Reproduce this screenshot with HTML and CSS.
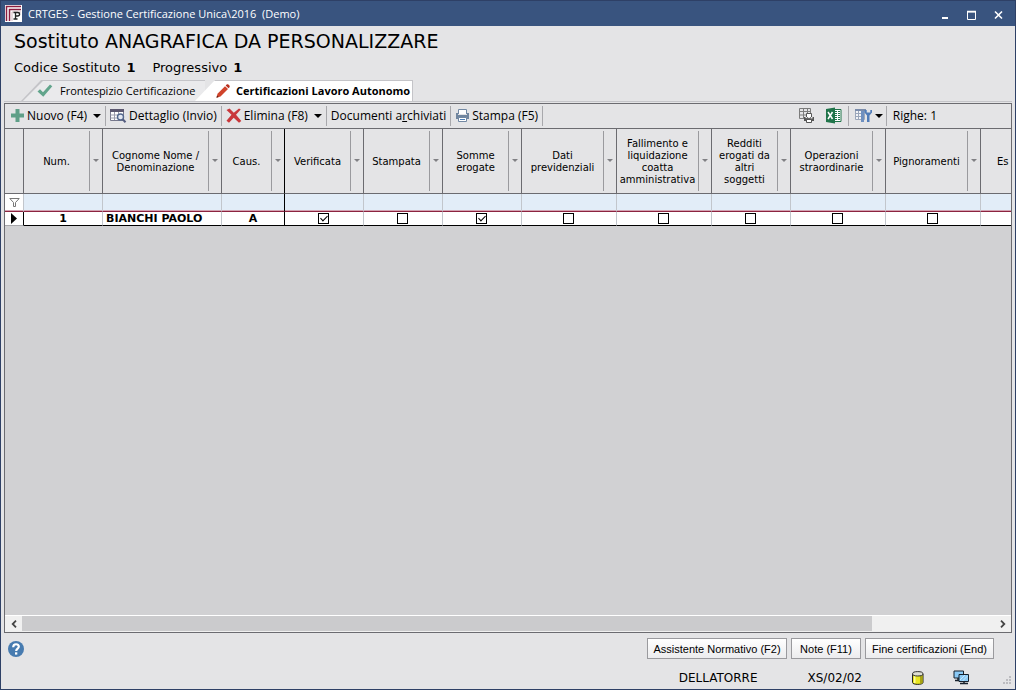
FILE: index.html
```html
<!DOCTYPE html>
<html lang="it">
<head>
<meta charset="utf-8">
<title>CRTGES - Gestione Certificazione Unica\2016 (Demo)</title>
<link rel="stylesheet" href="styles.css">
</head>
<body>
<div class="window">
  <header class="titlebar">
    <svg class="app-icon" width="17" height="17" viewBox="0 0 17 17" aria-hidden="true">
      <rect width="17" height="17" fill="#fff"/>
      <path d="M1.500 16V1.500H16M4.500 16V4.500H16" fill="none" stroke="#8c1d3f" stroke-width="1.500"/>
      <path d="M7 16V7H16" fill="none" stroke="#b98a99" stroke-width=".6"/>
      <path d="M8.500 7.500h4c2.800 0 2.800 3.500 0 3.500H10.500M10.500 7.500V14M8.500 14h4" fill="none" stroke="#222" stroke-width="1.300"/>
    </svg>
    <span class="window-title">CRTGES - Gestione Certificazione Unica\2016&nbsp; (Demo)</span>
    <div class="window-controls">
      <button type="button" aria-label="Riduci a icona"><svg width="11" height="11" viewBox="0 0 11 11"><path d="M3 8h6" stroke="#fff" stroke-width="2"/></svg></button>
      <button type="button" aria-label="Ingrandisci"><svg width="11" height="11" viewBox="0 0 11 11"><path d="M1.500 2h8v7.500h-8z" fill="none" stroke="#fff"/><path d="M1 1.500h9" stroke="#fff" stroke-width="1.500"/></svg></button>
      <button type="button" aria-label="Chiudi"><svg width="11" height="11" viewBox="0 0 11 11"><path d="M2 1.500l7 7M9 1.500l-7 7" stroke="#fff" stroke-width="1.600"/></svg></button>
    </div>
  </header>

  <main class="content">
    <h1 class="heading">Sostituto ANAGRAFICA DA PERSONALIZZARE</h1>
    <p class="subheading"><span>Codice Sostituto <b>1</b></span><span>Progressivo <b>1</b></span></p>

    <div class="tabs" role="tablist">
      <button type="button" class="tab" role="tab" aria-selected="false">
        <svg width="16" height="14" viewBox="0 0 16 14" aria-hidden="true"><path d="M0.500 7.500L3 5.300l3 3L13 0.500l2.300 1.800L6.300 12.800z" fill="#62a58c"/></svg>
        Frontespizio Certificazione
      </button>
      <button type="button" class="tab tab-active" role="tab" aria-selected="true">
        <svg width="16" height="16" viewBox="0 0 16 16" aria-hidden="true"><path d="M1.500 14.700l1-4L10 3.200l3 2.800-7.500 7.600z" fill="#d0432b"/><path d="M10.700 2.500l1-1c1.300-1 3.800 1.500 2.800 2.800l-1 1z" fill="#b8301f"/><path d="M1.500 14.700l.5-2.200 1.700 1.600z" fill="#5a2018"/></svg>
        Certificazioni Lavoro Autonomo
      </button>
    </div>

    <section class="panel">
      <div class="toolbar">
        <button type="button" class="tool">
          <svg width="15" height="15" viewBox="0 0 15 15" aria-hidden="true"><path d="M5.500 1h4v4.500H14v4H9.500V14h-4V9.500H1v-4h4.500z" fill="#5f9f88"/></svg>
          Nuovo (F4)<i class="caret"></i>
        </button>
        <button type="button" class="tool">
          <svg width="17" height="15" viewBox="0 0 17 15" aria-hidden="true"><path d="M.5 1.500h13v11H.5z" fill="#fff" stroke="#77788c"/><path d="M0 1h14v3H0z" fill="#5c5870"/><path d="M.5 7h13M.5 10h13M4.500 4v8M8.500 4v8" stroke="#9b9cac" fill="none"/><circle cx="10.500" cy="9" r="3" fill="#e4e8f2" stroke="#55698e" stroke-width="1.400"/><path d="M12.700 11.300l2.800 3" stroke="#555d80" stroke-width="2"/></svg>
          Dettaglio (Invio)
        </button>
        <button type="button" class="tool">
          <svg width="16" height="15" viewBox="0 0 16 15" aria-hidden="true"><path d="M.5 2L3.500.5l4.300 4.200L13 .5l1.700 1L10 6.800l5.300 6.200-2.300 1.700-5.300-5-4.700 5L.5 12.800l5-6z" fill="#c9373b"/></svg>
          Elimina (F8)<i class="caret"></i>
        </button>
        <button type="button" class="tool"><span>Documenti a<u>r</u>chiviati</span></button>
        <button type="button" class="tool">
          <svg width="15" height="15" viewBox="0 0 15 15" aria-hidden="true"><path d="M3.500 6V1.500h8V6" fill="#fff" stroke="#7288a3"/><path d="M1 5h2v2h9V5h2v6H1z" fill="#71869f"/><path d="M3.500 9.500h8v4h-8z" fill="#fff" stroke="#7288a3"/><path d="M5 11.500h5" stroke="#4d80b8"/></svg>
          Stampa (F5)
        </button>
        <div class="toolbar-right">
          <button type="button" class="tool-icon" aria-label="Stampa griglia">
            <svg width="17" height="17" viewBox="0 0 17 17"><path d="M1.500 1.500h11v10h-11zM1.500 4.500h11M1.500 8h11M5.500 1.500v10M9.500 1.500v10" fill="none" stroke="#7c7c7c"/><path d="M8.500 10V6.500h5V10" fill="#fff" stroke="#555"/><path d="M6 10h1.500v1.500h7V10H16v4H6z" fill="#555"/><path d="M8.500 12.500h5v3h-5z" fill="#fff" stroke="#555"/></svg>
          </button>
          <button type="button" class="tool-icon" aria-label="Esporta in Excel">
            <svg width="17" height="17" viewBox="0 0 17 17"><path d="M8 2.500h8v12H8z" fill="#fff" stroke="#20744a"/><path d="M10 4.500h2M13 4.500h2M10 6.500h2M13 6.500h2M10 8.500h2M13 8.500h2M10 10.500h2M13 10.500h2M10 12.500h2M13 12.500h2" stroke="#20744a"/><path d="M1 2l9-1.500v16L1 15z" fill="#20744a"/><path d="M3 5l4.500 7M7.500 5L3 12" stroke="#fff" stroke-width="1.500"/></svg>
          </button>
          <button type="button" class="tool-icon tool-columns" aria-label="Opzioni colonne">
            <svg width="17" height="15" viewBox="0 0 17 15"><path d="M.5 2.500h9v9h-9zM.5 5.500h9M.5 8.500h9M3.500 2v9.500" fill="#f2f3f6" stroke="#9aa6ba"/><path d="M0 1h11v2H0z" fill="#7a8cab"/><path d="M6 3h3v11H6z" fill="#6f90c0"/><path d="M9.500 2v2.500l2.500 3V14h2.500V7.500L17 4.500V2h-1.700v2.500h-3.600V2z" fill="#4f7bb8"/></svg><i class="caret"></i>
          </button>
          <span class="row-count">Righe: 1</span>
        </div>
      </div>

      <div class="grid-area">
        <table class="grid">
          <colgroup>
            <col class="c-mark"><col class="c-m"><col class="c-name"><col class="c-s"><col class="c-m"><col class="c-m"><col class="c-m"><col class="c-l"><col class="c-l"><col class="c-m"><col class="c-l"><col class="c-l"><col class="c-m">
          </colgroup>
          <thead>
            <tr>
              <th></th>
              <th scope="col"><div class="head"><span>Num.</span><i></i></div></th>
              <th scope="col"><div class="head"><span>Cognome Nome /<br>Denominazione</span><i></i></div></th>
              <th scope="col" class="frozen"><div class="head"><span>Caus.</span><i></i></div></th>
              <th scope="col"><div class="head"><span>Verificata</span><i></i></div></th>
              <th scope="col"><div class="head"><span>Stampata</span><i></i></div></th>
              <th scope="col"><div class="head"><span>Somme<br>erogate</span><i></i></div></th>
              <th scope="col"><div class="head"><span>Dati<br>previdenziali</span><i></i></div></th>
              <th scope="col"><div class="head"><span>Fallimento e<br>liquidazione<br>coatta<br>amministrativa</span><i></i></div></th>
              <th scope="col"><div class="head"><span>Redditi<br>erogati da<br>altri<br>soggetti</span><i></i></div></th>
              <th scope="col"><div class="head"><span>Operazioni<br>straordinarie</span><i></i></div></th>
              <th scope="col"><div class="head"><span>Pignoramenti</span><i></i></div></th>
              <th scope="col" class="cut">Es</th>
            </tr>
          </thead>
          <tbody>
            <tr class="filter">
              <td><svg width="11" height="11" viewBox="0 0 11 11" aria-hidden="true"><path d="M.8 1.500h9.400L6.500 5.500V9.500h-2v-4z" fill="none" stroke="#777"/></svg></td>
              <td></td><td></td><td class="frozen"></td><td></td><td></td><td></td><td></td><td></td><td></td><td></td><td></td><td></td>
            </tr>
            <tr class="record">
              <td class="marker"><svg width="6" height="11" viewBox="0 0 6 11" aria-hidden="true"><path d="M0 0l6 5.500L0 11z"/></svg></td>
              <td>1</td>
              <td class="name">BIANCHI PAOLO</td>
              <td class="frozen">A</td>
              <td><input type="checkbox" aria-label="Verificata" checked></td>
              <td><input type="checkbox" aria-label="Stampata"></td>
              <td><input type="checkbox" aria-label="Somme erogate" checked></td>
              <td><input type="checkbox" aria-label="Dati previdenziali"></td>
              <td><input type="checkbox" aria-label="Fallimento e liquidazione coatta amministrativa"></td>
              <td><input type="checkbox" aria-label="Redditi erogati da altri soggetti"></td>
              <td><input type="checkbox" aria-label="Operazioni straordinarie"></td>
              <td><input type="checkbox" aria-label="Pignoramenti"></td>
              <td></td>
            </tr>
          </tbody>
        </table>
      </div>

      <div class="scrollbar">
        <button type="button" aria-label="Scorri a sinistra"><svg width="6" height="8" viewBox="0 0 6 8"><path d="M5 .7L1.700 4 5 7.300" fill="none" stroke="#444" stroke-width="1.800"/></svg></button>
        <div class="track"><div class="thumb"></div></div>
        <button type="button" aria-label="Scorri a destra"><svg width="6" height="8" viewBox="0 0 6 8"><path d="M1 .7L4.300 4 1 7.300" fill="none" stroke="#444" stroke-width="1.800"/></svg></button>
      </div>
    </section>

    <footer class="actions">
      <button type="button" aria-label="Aiuto"><svg width="16" height="16" viewBox="0 0 16 16"><circle cx="8" cy="8" r="8" fill="#477bb0"/><path d="M5.200 6.300C5.200 2.200 11 2.400 10.800 5.800 10.700 7.700 8.200 7.800 8.200 10" fill="none" stroke="#fff" stroke-width="2.200"/><path d="M7 11.300h2.300v2.300H7z" fill="#fff"/></svg></button>
      <div class="action-buttons">
        <button type="button" class="push push-wide">Assistente Normativo (F2)</button>
        <button type="button" class="push push-small">Note (F11)</button>
        <button type="button" class="push push-mid">Fine certificazioni (End)</button>
      </div>
    </footer>
    <div class="status">
      <span>DELLATORRE</span>
      <span class="status-code">XS/02/02</span>
      <svg class="status-db" width="12" height="14" viewBox="0 0 12 14" aria-hidden="true"><path d="M.5 3v8.500c0 2.500 10.500 2.500 10.500 0V3z" fill="#e9e622" stroke="#222"/><path d="M8 5h2.500v7L8 13z" fill="#a9a514"/><path d="M2 5h1.500v7H2z" fill="#ffff9a"/><ellipse cx="5.750" cy="2.800" rx="5.200" ry="2.200" fill="#deded2" stroke="#333"/></svg>
      <svg class="status-net" width="17" height="15" viewBox="0 0 17 15" aria-hidden="true"><path d="M1 1h9.500v7H1z" fill="#8bcaf6" stroke="#16202c"/><path d="M2 10.500h6M5 8v2" stroke="#16202c" stroke-width="1.500"/><path d="M6 4.500h9.500v7H6z" fill="#8bcaf6" stroke="#16202c"/><path d="M7 10L12 5M9.500 11l5-5" stroke="#c9e9ff"/><path d="M7 13.500h8M11 11v2" stroke="#16202c" stroke-width="1.500"/></svg>
      <svg class="grip" width="9" height="9" viewBox="0 0 9 9" aria-hidden="true"><path d="M6 0h2v2H6zM3 3h2v2H3zM6 3h2v2H6zM0 6h2v2H0zM3 6h2v2H3zM6 6h2v2H6z" fill="#bcbcc0"/></svg>
    </div>
  </main>
</div>
</body>
</html>
```
FILE: styles.css
```css
* { box-sizing: border-box; }

body {
  margin: 0;
  font-family: "DejaVu Sans", Verdana, sans-serif;
  color: #000;
}

button {
  margin: 0;
  padding: 0;
  border: 0;
  background: none;
  color: inherit;
  font: inherit;
  white-space: nowrap;
}

svg { display: block; flex: none; }

.window {
  display: flex;
  flex-direction: column;
  height: 100vh;
  overflow: hidden;
  background: #e4e4e6;
  border: 1px solid #2e4066;
}

/* Title bar */
.titlebar {
  display: flex;
  align-items: center;
  flex: none;
  height: 25px;
  padding: 0 9px 0 4px;
  background: #39547f;
  color: #fff;
  font: 11px "Open Sans", "Noto Sans", sans-serif;
}
.window-title { margin-left: 6px; }
.window-controls { display: flex; gap: 16px; margin: 3px 2px 0 auto; }

/* Page body */
.content {
  display: flex;
  flex-direction: column;
  flex: 1;
  min-height: 0;
  padding: 0 3px;
}
.heading {
  margin: 3px 10px 0;
  font-size: 19px;
  font-weight: 400;
  line-height: 24px;
}
.subheading {
  display: flex;
  gap: 17px;
  margin: 7px 10px 0;
  font-size: 13px;
  line-height: 16px;
}
.subheading b { margin-left: 2px; }

/* Tabs */
.tabs {
  display: flex;
  margin-top: 4px;
  height: 22px;
  border-bottom: 1px solid #c4c4c8;
}
.tab {
  display: flex;
  align-items: center;
  gap: 7px;
  width: 184px;
  height: 21px;
  margin-left: 17px;
  padding: 0 6px 1px 16px;
  border-top: 1px solid #c4c4c8;
  background: linear-gradient(135deg, #c4c4c8 15px, #eaeaec 16px);
  clip-path: polygon(20px 0, 100% 0, 100% 100%, 0 100%);
  font: 11px "Open Sans", "Noto Sans", sans-serif;
}
.tab-active {
  gap: 5px;
  width: 218px;
  margin-left: -10px;
  padding-left: 20px;
  border-right: 1px solid #c4c4c8;
  background: #fff;
  font-weight: 700;
}

/* Panel */
.panel {
  display: flex;
  flex-direction: column;
  flex: 1;
  min-height: 0;
  margin-top: 1px;
  border: 1px solid #6b6b70;
}
.toolbar {
  display: flex;
  align-items: center;
  flex: none;
  height: 25px;
  padding-bottom: 1px;
  border-bottom: 1px solid #6b6b70;
  font: 12px "Open Sans", "Noto Sans", sans-serif;
}
.tool {
  display: flex;
  align-items: center;
  gap: 2px;
  height: 20px;
  padding: 0 4px;
  border-right: 1px solid #a8a8ac;
}
.tool:first-child { padding-left: 5px; }
.caret {
  margin-left: 4px;
  border: 4px solid transparent;
  border-top-color: #000;
  border-bottom: 0;
}
.toolbar-right {
  display: flex;
  align-items: center;
  margin: 0 74px 0 auto;
}
.tool-icon { display: flex; align-items: center; margin-right: 10px; }
.tool-columns {
  height: 20px;
  margin: 0 0 0 -4px;
  padding: 0 3px 0 6px;
  border: 1px solid #a8a8ac;
  border-width: 0 1px;
}
.tool-columns .caret { margin-left: 3px; }
.row-count { margin-left: 6px; }

/* Data grid */
.grid-area {
  flex: 1;
  min-height: 0;
  overflow: hidden;
  background: #d1d1d3;
}
.grid {
  table-layout: fixed;
  width: 0;
  border-collapse: separate;
  border-spacing: 0;
}
.c-mark { width: 19px; }
.c-s { width: 63px; }
.c-m { width: 79px; }
.c-l { width: 95px; }
.c-name { width: 119px; }

.grid th {
  height: 65px;
  padding: 0;
  background: #e4e4e6;
  border-right: 1px solid #6b6b70;
  border-bottom: 1px solid #6b6b70;
  font-size: 10px;
  font-weight: 400;
  line-height: 12px;
  white-space: nowrap;
}
.head { display: flex; height: 64px; padding: 2px 0; }
.head span {
  display: flex;
  flex: 1;
  min-width: 0;
  align-items: center;
  justify-content: center;
  padding-top: 2px;
  border-right: 1px solid #9a9a9e;
}
.head i {
  flex: none;
  width: 6px;
  height: 3px;
  margin: 28px 3px 0;
  border: 3px solid transparent;
  border-top-color: #808084;
  border-bottom: 0;
}
.grid th.cut { padding: 2px 0 0 16px; text-align: left; }

.grid td {
  padding: 0;
  text-align: center;
  border-right: 1px solid #c2c6cc;
}
.filter td {
  height: 18px;
  background: #e2edf8;
  border-bottom: 1px solid #8c2440;
  box-shadow: inset 0 -1px #d3a3b2;
}
.filter td:first-child { background: #fff; }
.filter svg { margin: 0 auto; }
.record td {
  height: 14px;
  background: #fff;
  border-bottom: 1px solid #000;
  font-size: 11px;
  font-weight: 700;
  line-height: 12px;
}
.grid td.name { padding-left: 3px; text-align: left; }
.record .marker svg { margin: 0 auto; }
.grid .record .marker { border-right-color: #000; border-bottom-color: #a8a8ac; }
.grid .frozen { border-right-color: #000; }

.record input {
  appearance: none;
  display: block;
  width: 11px;
  height: 11px;
  margin: 0 auto;
  border: 1px solid #000;
  background: #fff;
}
.record td:has(input) { padding-right: 2px; }
.record input:checked::after {
  content: "";
  display: block;
  width: 3px;
  height: 6px;
  margin: 0 0 0 3px;
  border: solid #000;
  border-width: 0 1px 1px 0;
  transform: rotate(45deg);
}

/* Scrollbar */
.scrollbar {
  display: flex;
  flex: none;
  height: 17px;
  background: #f0f0f0;
  border-top: 1px solid #fff;
}
.scrollbar button {
  display: flex;
  align-items: center;
  justify-content: center;
  width: 17px;
}
.track { flex: 1; }
.thumb { width: 87.4%; height: 15px; background: #cbcbcd; }

/* Footer */
.actions {
  display: flex;
  align-items: center;
  justify-content: space-between;
  flex: none;
  height: 21px;
  margin: 5px 18px 0 4px;
}
.action-buttons { display: flex; gap: 4px; }
.push {
  height: 21px;
  background: linear-gradient(#fff, #ececee);
  border: 1px solid #9a9a9e;
  font: 11px "Liberation Sans", Arial, sans-serif;
}
.push-wide { width: 140px; }
.push-small { width: 70px; }
.push-mid { width: 129px; }

.status {
  display: flex;
  align-items: center;
  justify-content: flex-end;
  flex: none;
  height: 30px;
  padding-top: 7px;
  font-size: 12px;
}
.status-code { margin-left: 50px; }
.status-db { margin-left: 50px; }
.status-net { margin-left: 29px; }
.grip { align-self: flex-end; margin: 0 0 4px 33px; }
```
